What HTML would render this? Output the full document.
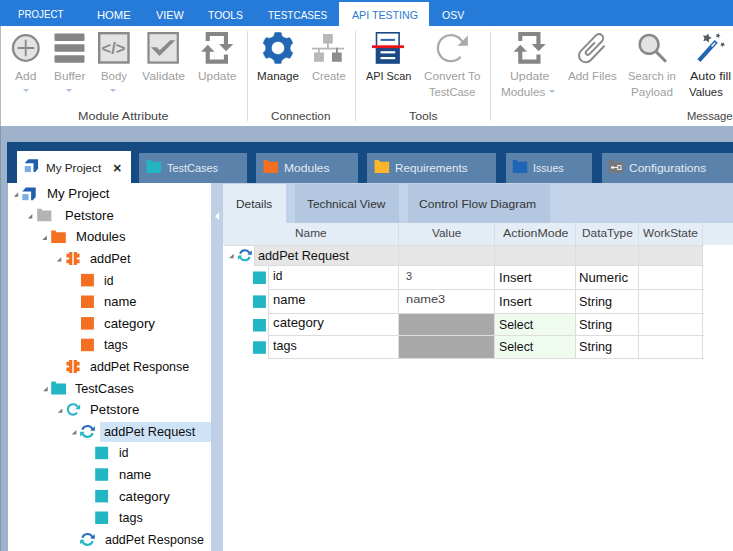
<!DOCTYPE html>
<html>
<head>
<meta charset="utf-8">
<title>API Testing</title>
<style>
html,body{margin:0;padding:0;}
body{width:733px;height:551px;overflow:hidden;position:relative;background:#fff;font-family:"Liberation Sans",sans-serif;font-size:12px;color:#222;}
div,span,svg{position:absolute;white-space:nowrap;}
.t{height:16px;line-height:16px;transform-origin:0 0;}
#topbar{left:0;top:0;width:733px;height:25.5px;background:#267bd8;}
#projtab{left:0;top:0;width:82px;height:26px;background:#267bd8;}
#acttab{left:339px;top:2px;width:90px;height:24px;background:#fff;}
#leftedge{left:0;top:26px;width:1px;height:100px;background:#b9b9b9;}
.sep{top:31px;width:1px;height:90px;background:#dedede;}
.dd{width:0;height:0;border-left:3.2px solid transparent;border-right:3.2px solid transparent;border-top:3.4px solid #a9bfdd;top:89px;}
#band{left:0;top:126px;width:733px;height:16px;background:#9fb2cb;}
#bandl{left:0;top:142px;width:8px;height:409px;background:#9fb2cb;}
#dark{left:7.1px;top:141.8px;width:726px;height:41px;background:#164a83;}
.tab{top:153px;height:30px;background:#5a82ab;}
#tab0{left:16.8px;top:151px;width:113.9px;height:32px;background:#fff;}
#sel{left:100px;top:422px;width:110.5px;height:19.6px;background:#cfe3f7;}
#split{left:211px;top:183px;width:12px;height:368px;background:#bfcfe6;}
#dstrip{left:223px;top:183px;width:510px;height:40px;background:#c2d2e8;}
.dt{top:184px;height:39px;background:#b3c7e1;}
#ghead{left:223px;top:223px;width:510px;height:22.4px;background:#e4ecf6;}
.hsep{top:223px;width:1px;height:22px;background:#d9dee6;}
#grow0{left:254px;top:245.4px;width:449px;height:20.3px;background:#e6e6e6;}
.hl{height:1px;background:#dddddd;}
.vl{width:1px;background:#dddddd;}
.gc{background:#a9a9a9;}
.sc{background:#f0fbf0;}
</style>
</head>
<body>
<div id="topbar"></div>
<div id="projtab"></div>
<div id="acttab"></div>
<div id="leftedge"></div>
<div class="dd" style="left:22.6px;"></div>
<div class="dd" style="left:66px;"></div>
<div class="dd" style="left:110.4px;"></div>
<div class="dd" style="left:549px;top:89.6px;"></div>
<div class="sep" style="left:247px;"></div>
<div class="sep" style="left:355px;"></div>
<div class="sep" style="left:490px;"></div>

<div id="band"></div>
<div id="bandl"></div>
<div id="dark"></div>
<div style="left:0;top:126px;width:1px;height:425px;background:#8597af;"></div>
<div class="tab" id="tab0"></div>
<div class="tab" style="left:139.3px;width:107.3px;"></div>
<div class="tab" style="left:256px;width:102px;"></div>
<div class="tab" style="left:367px;width:129px;"></div>
<div class="tab" style="left:505.8px;width:86.2px;"></div>
<div class="tab" style="left:601.8px;width:132px;"></div>

<div id="sel"></div>
<div id="split"></div>
<div id="dstrip"></div>
<div class="dt" style="left:223px;width:63.4px;background:#e4ecf6;"></div>
<div class="dt" style="left:294.5px;width:104.2px;"></div>
<div class="dt" style="left:408.3px;width:141.4px;"></div>
<div id="ghead"></div>
<div class="hsep" style="left:398.3px;"></div>
<div class="hsep" style="left:494.3px;"></div>
<div class="hsep" style="left:574.6px;"></div>
<div class="hsep" style="left:638.3px;"></div>
<div class="hsep" style="left:702.3px;"></div>
<div id="grow0"></div>
<div class="gc" style="left:399px;top:313px;width:95.5px;height:45px;"></div>
<div class="sc" style="left:495px;top:313px;width:80px;height:45px;"></div>
<!-- grid lines -->
<div class="hl" style="left:223.5px;top:244.9px;width:480px;background:#d9dde3;"></div>
<div class="hl" style="left:254px;top:265.3px;width:449.5px;"></div>
<div class="vl" style="left:253.6px;top:245.4px;height:20.5px;background:#d8d8d8;"></div>
<div class="hl" style="left:268.5px;top:288.9px;width:435px;"></div>
<div class="hl" style="left:268.5px;top:312.6px;width:435px;"></div>
<div class="hl" style="left:268.5px;top:335.1px;width:435px;"></div>
<div class="hl" style="left:268.5px;top:357.5px;width:435px;"></div>
<div class="vl" style="left:268.3px;top:265.5px;height:93px;"></div>
<div class="vl" style="left:398.3px;top:245.4px;height:20px;background:#dddddd;"></div>
<div class="vl" style="left:398.3px;top:265.4px;height:93px;"></div>
<div class="vl" style="left:494.3px;top:245.4px;height:20px;background:#dddddd;"></div>
<div class="vl" style="left:494.3px;top:265.4px;height:93px;"></div>
<div class="vl" style="left:574.6px;top:245.4px;height:20px;background:#dddddd;"></div>
<div class="vl" style="left:574.6px;top:265.4px;height:93px;"></div>
<div class="vl" style="left:638.3px;top:245.4px;height:20px;background:#dddddd;"></div>
<div class="vl" style="left:638.3px;top:265.4px;height:93px;"></div>
<div class="vl" style="left:702.3px;top:245.4px;height:20px;background:#dddddd;"></div>
<div class="vl" style="left:702.3px;top:265.4px;height:93px;"></div>

<svg width="733" height="551" viewBox="0 0 733 551" style="left:0;top:0;">
<circle cx="25.8" cy="48" r="12.8" fill="#e3e3e3" stroke="#898989" stroke-width="2.3"/>
<path d="M18.3,48H33.6M25.7,40.3V55.6" stroke="#898989" stroke-width="1.8" stroke-linecap="round" fill="none"/>
<rect x="54.5" y="33.4" width="30" height="7.5" rx="1" fill="#858585"/>
<rect x="54.5" y="44.3" width="30" height="7.5" rx="1" fill="#858585"/>
<rect x="54.5" y="55.2" width="30" height="7.5" rx="1" fill="#858585"/>
<rect x="99.2" y="33.2" width="29.3" height="29.3" fill="#e3e3e3" stroke="#898989" stroke-width="2.4"/>
<rect x="148.5" y="33.1" width="29.3" height="29.5" fill="#e3e3e3" stroke="#898989" stroke-width="2.2"/>
<polygon points="150.99,47.24 156.79,47.24 159.7,50.14 170.22,40.2 175.3,40.2 159.55,55.95" fill="#898989"/>
<polygon points="205.7,32.0 228.0,32.0 228.0,44.0 233.2,44.0 226.1,51.2 219.1,44.0 223.9,44.0 223.9,36.1 209.8,36.1 209.8,40.9 205.7,40.9" fill="#868686"/>
<polygon points="207.8,44.7 214.6,51.8 209.8,51.8 209.8,59.6 223.9,59.6 223.9,54.6 228.0,54.6 228.0,63.8 205.7,63.8 205.7,51.8 201.0,51.8" fill="#868686"/>
<polygon points="518.2,32.0 540.5,32.0 540.5,44.0 545.7,44.0 538.6,51.2 531.6,44.0 536.4,44.0 536.4,36.1 522.3,36.1 522.3,40.9 518.2,40.9" fill="#868686"/>
<polygon points="520.3,44.7 527.1,51.8 522.3,51.8 522.3,59.6 536.4,59.6 536.4,54.6 540.5,54.6 540.5,63.8 518.2,63.8 518.2,51.8 513.5,51.8" fill="#868686"/>
<path d="M274.71,32.69 A15.6,15.6 0 0 1 281.19,32.69 A5.55,5.55 0 0 0 289.54,37.51 A15.6,15.6 0 0 1 292.79,43.13 A5.55,5.55 0 0 0 292.79,52.77 A15.6,15.6 0 0 1 289.54,58.39 A5.55,5.55 0 0 0 281.19,63.21 A15.6,15.6 0 0 1 274.71,63.21 A5.55,5.55 0 0 0 266.36,58.39 A15.6,15.6 0 0 1 263.11,52.77 A5.55,5.55 0 0 0 263.11,43.13 A15.6,15.6 0 0 1 266.36,37.51 A5.55,5.55 0 0 0 274.71,32.69Z M284.50,47.95 A6.55,6.55 0 1 0 271.40,47.95 A6.55,6.55 0 1 0 284.50,47.95Z" fill="#2366b2" fill-rule="evenodd" stroke="#2366b2" stroke-width="0.5" stroke-linejoin="round"/>
<rect x="323" y="34" width="9.8" height="9.6" fill="#b8b8b8"/>
<rect x="327" y="43" width="1.8" height="5" fill="#b8b8b8"/>
<rect x="312" y="47.7" width="32" height="1.8" fill="#b8b8b8"/>
<rect x="318" y="49" width="1.8" height="4" fill="#b8b8b8"/>
<rect x="314" y="52.5" width="9.9" height="9.3" fill="#b8b8b8"/>
<rect x="336" y="47.7" width="1.8" height="5.3" fill="#8c8c8c"/>
<rect x="332" y="52.5" width="9.7" height="9.3" fill="#8c8c8c"/>
<rect x="376.5" y="32.8" width="22.6" height="14" fill="#fff" stroke="#1b4a87" stroke-width="1.6"/>
<rect x="380.6" y="38.9" width="14.4" height="2" fill="#2b66ae"/>
<rect x="375.7" y="48" width="24.2" height="15.8" fill="#1b4a87"/>
<rect x="380.5" y="51.2" width="14.7" height="2.2" fill="#fff"/>
<rect x="380.5" y="57" width="14.7" height="2.2" fill="#fff"/>
<rect x="372" y="45.3" width="32" height="2.8" fill="#e8131b"/>
<path d="M462.16,41.60 A13.0,13.0 0 1 0 460.71,56.63" fill="none" stroke="#aaaaaa" stroke-width="2.3"/>
<polygon points="467.9,35.6 467.9,45.8 457.6,45.8" fill="#aaaaaa"/>
<g transform="matrix(0.695,-0.719,0.719,0.695,591.9,47.9)"><path d="M9.6,7.6 L-9.8,7.6 A6.7,6.7 0 0 1 -9.8,-5.8 L11.8,-5.8 A4.2,4.2 0 0 1 11.8,2.6 L-6.2,2.6 A2.15,2.15 0 0 1 -6.2,-1.7 L5.2,-1.7" fill="none" stroke="#898989" stroke-width="2" stroke-linecap="round"/></g>
<circle cx="649.1" cy="44.4" r="9.4" fill="#e2e2e2" stroke="#898989" stroke-width="2.5"/>
<path d="M656,51.6L666,61.8" stroke="#898989" stroke-width="3" fill="none"/>
<path d="M698.9,60.6L716.2,41.4" stroke="#2166b3" stroke-width="4.2" fill="none"/>
<path d="M711.6,46.4L715,42.7" stroke="#fff" stroke-width="1.5" fill="none"/>
<polygon points="708.22,33.46 708.94,36.43 711.69,37.75 709.10,39.36 708.68,42.39 706.35,40.41 703.35,40.96 704.50,38.13 703.06,35.44 706.10,35.67" fill="#555b63"/>
<polygon points="718.45,33.04 718.94,34.70 720.57,35.24 719.15,36.21 719.14,37.94 717.77,36.88 716.13,37.41 716.71,35.78 715.70,34.38 717.43,34.43" fill="#555b63"/>
<polygon points="723.90,42.25 723.79,43.97 725.14,45.04 723.47,45.47 722.87,47.09 721.95,45.63 720.22,45.56 721.33,44.23 720.86,42.57 722.46,43.21" fill="#555b63"/>
<polygon points="24.7,163.3 28.2,159.3 38.1,159.3 38.1,168.8 35.2,172.10000000000002 33.5,172.10000000000002 33.5,163.3" fill="#1f5fae"/>
<rect x="24.7" y="166.0" width="6.2" height="6.1" fill="#7aaee6"/>
<path d="M146.5,160h4.1l1.2,1.8H161.0V172.9H146.5Z" fill="#22b5c4"/>
<path d="M263.5,160h4.1l1.2,1.8H278.0V172.9H263.5Z" fill="#f36f21"/>
<path d="M374.6,160h4.1l1.2,1.8H389.1V172.9H374.6Z" fill="#fdb52b"/>
<path d="M512.8,160h4.1l1.2,1.8H527.3V172.9H512.8Z" fill="#1f65b7"/>
<path d="M608.8,160h4.1l1.2,1.8H623.0999999999999V172.7H608.8Z" fill="#77787b"/>
<rect x="611" y="166.5" width="3.2" height="2" fill="#fff"/><rect x="613" y="167.1" width="5" height="0.9" fill="#fff"/><rect x="617.7" y="165.6" width="3.3" height="3.8" fill="none" stroke="#fff" stroke-width="0.9"/>
<polygon points="18.2,192.4 18.2,196.8 13.7,196.8" fill="#777"/>
<polygon points="22.3,191.4 25.8,187.4 35.7,187.4 35.7,196.9 32.8,200.20000000000002 31.1,200.20000000000002 31.1,191.4" fill="#1f5fae"/>
<rect x="22.3" y="194.1" width="6.2" height="6.1" fill="#7aaee6"/>
<polygon points="32.3,214.0 32.3,218.4 27.8,218.4" fill="#777"/>
<path d="M37.2,208.79999999999998h4.1l1.2,1.8H51.400000000000006V221.2H37.2Z" fill="#b3b3b3"/>
<polygon points="46.8,235.6 46.8,240.0 42.3,240.0" fill="#777"/>
<path d="M51.2,230.39999999999998h4.1l1.2,1.8H65.8V242.99999999999997H51.2Z" fill="#f36f21"/>
<polygon points="61.3,257.2 61.3,261.6 56.8,261.6" fill="#777"/>
<path d="M69.10000000000001,252.0h3.2v13h-3.2v-1.8h-2.7v-3.8h2.7v-1.8h-2.7v-3.8h2.7z M73.7,252.0h3.2v1.8h2.7v3.8h-2.7v1.8h2.7v3.8h-2.7v1.8h-3.2z" fill="#f36f21"/>
<rect x="81" y="273.90" width="12.9" height="12.5" fill="#f36f21"/>
<rect x="81" y="295.50" width="12.9" height="12.5" fill="#f36f21"/>
<rect x="81" y="317.10" width="12.9" height="12.5" fill="#f36f21"/>
<rect x="81" y="338.70" width="12.9" height="12.5" fill="#f36f21"/>
<path d="M69.10000000000001,360.0h3.2v13h-3.2v-1.8h-2.7v-3.8h2.7v-1.8h-2.7v-3.8h2.7z M73.7,360.0h3.2v1.8h2.7v3.8h-2.7v1.8h2.7v3.8h-2.7v1.8h-3.2z" fill="#f36f21"/>
<polygon points="47.7,386.8 47.7,391.2 43.2,391.2" fill="#777"/>
<path d="M51.2,381.6h4.1l1.2,1.8H66.0V394.5H51.2Z" fill="#22b5c4"/>
<polygon points="62.3,408.4 62.3,412.8 57.8,412.8" fill="#777"/>
<path d="M77.59,406.96 A5.2,5.2 0 1 0 77.10,412.60" fill="none" stroke="#27b4c6" stroke-width="2.1"/>
<polygon points="80.1,404.5 80.1,409.2 75.3,409.2" fill="#27b4c6"/>
<polygon points="76.3,430.0 76.3,434.4 71.8,434.4" fill="#777"/>
<path d="M82.36,429.73 A5.40,5.40 0 0 1 92.39,429.12" fill="none" stroke="#2a6dc0" stroke-width="2.20"/>
<polygon points="94.9,425.9 94.9,430.8 90.2,430.8" fill="#2a6dc0"/>
<path d="M92.64,433.07 A5.40,5.40 0 0 1 82.61,433.68" fill="none" stroke="#27b4c6" stroke-width="2.20"/>
<polygon points="80.1,436.5 80.1,431.7 84.8,431.7" fill="#27b4c6"/>
<rect x="95.2" y="446.70" width="12.9" height="12.5" fill="#22b5c4"/>
<rect x="95.2" y="468.30" width="12.9" height="12.5" fill="#22b5c4"/>
<rect x="95.2" y="489.90" width="12.9" height="12.5" fill="#22b5c4"/>
<rect x="95.2" y="511.50" width="12.9" height="12.5" fill="#22b5c4"/>
<path d="M82.36,537.73 A5.40,5.40 0 0 1 92.39,537.12" fill="none" stroke="#2a6dc0" stroke-width="2.20"/>
<polygon points="94.9,533.9 94.9,538.8 90.2,538.8" fill="#2a6dc0"/>
<path d="M92.64,541.07 A5.40,5.40 0 0 1 82.61,541.68" fill="none" stroke="#27b4c6" stroke-width="2.20"/>
<polygon points="80.1,544.5 80.1,539.7 84.8,539.7" fill="#27b4c6"/>
<polygon points="233.6,253.8 233.6,258.2 229.1,258.2" fill="#777"/>
<path d="M240.12,253.75 A5.02,5.02 0 0 1 249.45,253.18" fill="none" stroke="#2a6dc0" stroke-width="2.05"/>
<polygon points="251.8,250.2 251.8,254.7 247.4,254.7" fill="#2a6dc0"/>
<path d="M249.68,256.85 A5.02,5.02 0 0 1 240.35,257.42" fill="none" stroke="#27b4c6" stroke-width="2.05"/>
<polygon points="238.0,260.0 238.0,255.6 242.4,255.6" fill="#27b4c6"/>
<rect x="253" y="271.50" width="12.9" height="12.5" fill="#22b5c4"/>
<rect x="253" y="295.40" width="12.9" height="12.5" fill="#22b5c4"/>
<rect x="253" y="319.00" width="12.9" height="12.5" fill="#22b5c4"/>
<rect x="253" y="341.30" width="12.9" height="12.5" fill="#22b5c4"/>
<polygon points="219.2,212.2 219.2,220.2 215.1,216.2" fill="#fff"/>
</svg>
<span class="t" style="left:18.29px;top:6.40px;font-size:11.5px;color:#fff;transform:scaleX(0.8446);">PROJECT</span>
<span class="t" style="left:97.48px;top:7.00px;font-size:11.5px;color:#fff;transform:scaleX(0.9748);">HOME</span>
<span class="t" style="left:155.69px;top:7.00px;font-size:11.5px;color:#fff;transform:scaleX(0.9435);">VIEW</span>
<span class="t" style="left:208.38px;top:7.00px;font-size:11.5px;color:#fff;transform:scaleX(0.9007);">TOOLS</span>
<span class="t" style="left:267.88px;top:7.00px;font-size:11.5px;color:#fff;transform:scaleX(0.8661);">TESTCASES</span>
<span class="t" style="left:351.69px;top:7.00px;font-size:11.5px;color:#2b7cd3;transform:scaleX(0.9253);">API TESTING</span>
<span class="t" style="left:441.88px;top:7.00px;font-size:11.5px;color:#fff;transform:scaleX(0.9149);">OSV</span>
<span class="t" style="left:14.88px;top:68.00px;font-size:11.5px;color:#a0a0a0;transform:scaleX(1.0421);">Add</span>
<span class="t" style="left:54.09px;top:68.00px;font-size:11.5px;color:#a0a0a0;transform:scaleX(1.0277);">Buffer</span>
<span class="t" style="left:101.19px;top:68.00px;font-size:11.5px;color:#a0a0a0;transform:scaleX(0.9928);">Body</span>
<span class="t" style="left:141.98px;top:68.00px;font-size:11.5px;color:#a0a0a0;transform:scaleX(1.0592);">Validate</span>
<span class="t" style="left:198.19px;top:68.00px;font-size:11.5px;color:#a0a0a0;transform:scaleX(1.0360);">Update</span>
<span class="t" style="left:256.58px;top:68.00px;font-size:11.5px;color:#2b2b2b;transform:scaleX(1.0112);">Manage</span>
<span class="t" style="left:311.78px;top:68.00px;font-size:11.5px;color:#a0a0a0;transform:scaleX(0.9739);">Create</span>
<span class="t" style="left:365.99px;top:68.00px;font-size:11.5px;color:#2b2b2b;transform:scaleX(0.9453);">API Scan</span>
<span class="t" style="left:423.78px;top:68.00px;font-size:11.5px;color:#a0a0a0;transform:scaleX(1.0185);">Convert To</span>
<span class="t" style="left:428.88px;top:83.80px;font-size:11.5px;color:#a0a0a0;transform:scaleX(0.9665);">TestCase</span>
<span class="t" style="left:509.58px;top:68.00px;font-size:11.5px;color:#a0a0a0;transform:scaleX(1.0630);">Update</span>
<span class="t" style="left:501.28px;top:83.80px;font-size:11.5px;color:#a0a0a0;transform:scaleX(1.0198);">Modules</span>
<span class="t" style="left:568.18px;top:68.00px;font-size:11.5px;color:#a0a0a0;transform:scaleX(1.0165);">Add Files</span>
<span class="t" style="left:628.38px;top:68.00px;font-size:11.5px;color:#a0a0a0;transform:scaleX(0.9822);">Search in</span>
<span class="t" style="left:630.88px;top:83.80px;font-size:11.5px;color:#a0a0a0;transform:scaleX(1.0112);">Payload</span>
<span class="t" style="left:690.18px;top:68.00px;font-size:11.5px;color:#2b2b2b;transform:scaleX(1.0878);">Auto fill</span>
<span class="t" style="left:688.59px;top:83.80px;font-size:11.5px;color:#2b2b2b;transform:scaleX(0.9859);">Values</span>
<span class="t" style="left:78.48px;top:108.20px;font-size:11.5px;color:#444;transform:scaleX(1.0893);">Module Attribute</span>
<span class="t" style="left:270.99px;top:108.20px;font-size:11.5px;color:#444;transform:scaleX(1.0214);">Connection</span>
<span class="t" style="left:409.38px;top:108.20px;font-size:11.5px;color:#444;transform:scaleX(1.0696);">Tools</span>
<span class="t" style="left:686.78px;top:108.20px;font-size:11.5px;color:#444;transform:scaleX(0.9777);">Message</span>
<span class="t" style="left:45.59px;top:159.70px;font-size:11.5px;color:#222;transform:scaleX(1.0148);">My Project</span>
<span class="t" style="left:167.08px;top:159.70px;font-size:11.5px;color:#e3ebf4;transform:scaleX(0.9486);">TestCases</span>
<span class="t" style="left:283.58px;top:159.70px;font-size:11.5px;color:#e3ebf4;transform:scaleX(1.0474);">Modules</span>
<span class="t" style="left:394.88px;top:159.70px;font-size:11.5px;color:#e3ebf4;transform:scaleX(1.0145);">Requirements</span>
<span class="t" style="left:532.88px;top:159.70px;font-size:11.5px;color:#e3ebf4;transform:scaleX(0.9212);">Issues</span>
<span class="t" style="left:629.18px;top:159.70px;font-size:11.5px;color:#e3ebf4;transform:scaleX(1.0401);">Configurations</span>
<span class="t" style="left:235.69px;top:196.10px;font-size:11.5px;color:#333;transform:scaleX(1.0305);">Details</span>
<span class="t" style="left:306.69px;top:196.10px;font-size:11.5px;color:#333;transform:scaleX(1.0339);">Technical View</span>
<span class="t" style="left:419.08px;top:196.10px;font-size:11.5px;color:#333;transform:scaleX(1.0524);">Control Flow Diagram</span>
<span class="t" style="left:295.49px;top:225.30px;font-size:11.5px;color:#444;transform:scaleX(1.0307);">Name</span>
<span class="t" style="left:432.19px;top:225.30px;font-size:11.5px;color:#444;transform:scaleX(1.0304);">Value</span>
<span class="t" style="left:502.58px;top:225.30px;font-size:11.5px;color:#444;transform:scaleX(1.0773);">ActionMode</span>
<span class="t" style="left:581.99px;top:225.30px;font-size:11.5px;color:#444;transform:scaleX(1.0304);">DataType</span>
<span class="t" style="left:643.38px;top:225.30px;font-size:11.5px;color:#444;transform:scaleX(1.0233);">WorkState</span>
<span class="t" style="left:47.08px;top:186.10px;font-size:12.4px;color:#0c0c0c;transform:scaleX(1.0686);">My Project</span>
<span class="t" style="left:64.68px;top:207.70px;font-size:12.4px;color:#0c0c0c;transform:scaleX(1.0562);">Petstore</span>
<span class="t" style="left:76.08px;top:229.30px;font-size:12.4px;color:#0c0c0c;transform:scaleX(1.0556);">Modules</span>
<span class="t" style="left:89.88px;top:250.90px;font-size:12.4px;color:#0c0c0c;transform:scaleX(1.0297);">addPet</span>
<span class="t" style="left:104.28px;top:272.50px;font-size:12.4px;color:#0c0c0c;transform:scaleX(0.9784);">id</span>
<span class="t" style="left:104.28px;top:294.10px;font-size:12.4px;color:#0c0c0c;transform:scaleX(1.0467);">name</span>
<span class="t" style="left:104.28px;top:315.70px;font-size:12.4px;color:#0c0c0c;transform:scaleX(1.0719);">category</span>
<span class="t" style="left:104.28px;top:337.30px;font-size:12.4px;color:#0c0c0c;transform:scaleX(1.0139);">tags</span>
<span class="t" style="left:89.88px;top:358.90px;font-size:12.4px;color:#0c0c0c;transform:scaleX(1.0074);">addPet Response</span>
<span class="t" style="left:74.88px;top:380.50px;font-size:12.4px;color:#0c0c0c;transform:scaleX(1.0171);">TestCases</span>
<span class="t" style="left:89.88px;top:402.10px;font-size:12.4px;color:#0c0c0c;transform:scaleX(1.0670);">Petstore</span>
<span class="t" style="left:104.08px;top:423.70px;font-size:12.4px;color:#0c0c0c;transform:scaleX(1.0267);">addPet Request</span>
<span class="t" style="left:119.08px;top:445.30px;font-size:12.4px;color:#0c0c0c;transform:scaleX(0.9681);">id</span>
<span class="t" style="left:119.08px;top:466.90px;font-size:12.4px;color:#0c0c0c;transform:scaleX(1.0403);">name</span>
<span class="t" style="left:119.08px;top:488.50px;font-size:12.4px;color:#0c0c0c;transform:scaleX(1.0677);">category</span>
<span class="t" style="left:119.08px;top:510.10px;font-size:12.4px;color:#0c0c0c;transform:scaleX(1.0097);">tags</span>
<span class="t" style="left:104.68px;top:531.70px;font-size:12.4px;color:#0c0c0c;transform:scaleX(1.0034);">addPet Response</span>
<span class="t" style="left:257.98px;top:248.10px;font-size:12.4px;color:#111;transform:scaleX(1.0233);">addPet Request</span>
<span class="t" style="left:273.18px;top:267.70px;font-size:12.4px;color:#111;transform:scaleX(0.9681);">id</span>
<span class="t" style="left:273.18px;top:291.70px;font-size:12.4px;color:#111;transform:scaleX(1.0499);">name</span>
<span class="t" style="left:273.18px;top:315.30px;font-size:12.4px;color:#111;transform:scaleX(1.0698);">category</span>
<span class="t" style="left:273.18px;top:337.80px;font-size:12.4px;color:#111;transform:scaleX(1.0097);">tags</span>
<span class="t" style="left:406.49px;top:267.60px;font-size:11.5px;color:#444;transform:scaleX(0.9413);">3</span>
<span class="t" style="left:406.28px;top:291.30px;font-size:11.5px;color:#444;transform:scaleX(1.1154);">name3</span>
<span class="t" style="left:498.88px;top:269.90px;font-size:12.4px;color:#111;transform:scaleX(1.0532);">Insert</span>
<span class="t" style="left:498.88px;top:293.50px;font-size:12.4px;color:#111;transform:scaleX(1.0532);">Insert</span>
<span class="t" style="left:498.88px;top:317.10px;font-size:12.4px;color:#111;transform:scaleX(0.9945);">Select</span>
<span class="t" style="left:498.88px;top:339.30px;font-size:12.4px;color:#111;transform:scaleX(0.9945);">Select</span>
<span class="t" style="left:579.08px;top:269.90px;font-size:12.4px;color:#111;transform:scaleX(1.0630);">Numeric</span>
<span class="t" style="left:579.08px;top:293.50px;font-size:12.4px;color:#111;transform:scaleX(1.0208);">String</span>
<span class="t" style="left:579.08px;top:317.10px;font-size:12.4px;color:#111;transform:scaleX(1.0208);">String</span>
<span class="t" style="left:579.08px;top:339.30px;font-size:12.4px;color:#111;transform:scaleX(1.0208);">String</span>
<span class="t" style="left:112.9px;top:160px;font-size:14.5px;color:#111;-webkit-text-stroke:0.4px #111;">×</span>
<span class="t" style="left:101.6px;top:40.3px;font-size:16.5px;font-weight:bold;color:#8a8a8a;letter-spacing:0px;">&lt;/&gt;</span>
</body>
</html>
